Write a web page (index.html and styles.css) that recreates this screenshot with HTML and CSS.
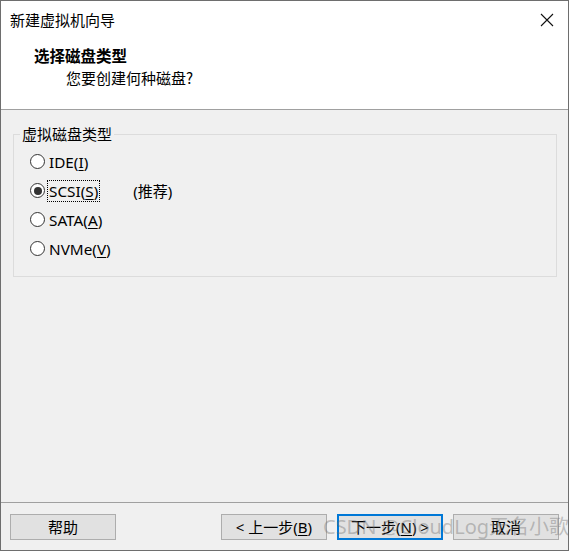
FILE: index.html
```html
<!DOCTYPE html>
<html>
<head>
<meta charset="utf-8">
<link rel="stylesheet" href="styles.css">
</head>
<body>
<div class="window">
  <div class="header">
    <div class="titlebar">
      <span class="title">新建虚拟机向导</span>
      <svg class="close" width="14" height="14" viewBox="0 0 14 14"><path d="M1 1 L13 13 M13 1 L1 13" stroke="#111" stroke-width="1.1" fill="none"/></svg>
    </div>
    <div class="heading">选择磁盘类型</div>
    <div class="sub">您要创建何种磁盘?</div>
  </div>
  <div class="body">
    <fieldset class="group">
      <legend>虚拟磁盘类型</legend>
      <div class="row"><span class="radio"></span><span class="lbl">IDE(<u>I</u>)</span></div>
      <div class="row"><span class="radio on"></span><span class="lbl focus">SCSI(<u>S</u>)</span><span class="rec">(推荐)</span></div>
      <div class="row"><span class="radio"></span><span class="lbl">SATA(<u>A</u>)</span></div>
      <div class="row"><span class="radio"></span><span class="lbl">NVMe(<u>V</u>)</span></div>
    </fieldset>
  </div>
  <div class="footer">
    <button class="btn">帮助</button>
    <div class="spacer"></div>
    <button class="btn">&lt; 上一步(<u>B</u>)</button>
    <button class="btn default">下一步(<u>N</u>) &gt;</button>
    <button class="btn">取消</button>
  </div>
  <div class="watermark">CSDN @CloudLog无名小歌</div>
</div>
</body>
</html>
```

FILE: styles.css
```css
html, body {
  margin: 0;
  padding: 0;
  background: #ffffff;
}
body {
  font-family: "Noto Sans", "Noto Sans CJK SC", sans-serif;
  font-size: 15px;
  color: #000;
}
.window {
  position: relative;
  box-sizing: border-box;
  width: 569px;
  height: 551px;
  border: 1px solid #6e6e6e;
  background: #f0f0f0;
  display: flex;
  flex-direction: column;
}
.header {
  background: #ffffff;
  height: 108px;
  border-bottom: 1px solid #a0a0a0;
  flex: none;
}
.titlebar {
  height: 38px;
  display: flex;
  align-items: center;
  justify-content: space-between;
  padding: 0 14px 0 9px;
}
.title {
  font-family: "Noto Sans CJK SC", sans-serif;
  font-size: 15px;
  line-height: 20px;
}
.close {
  display: block;
}
.heading {
  margin-top: 6px;
  padding-left: 33px;
  font-family: "Noto Sans CJK SC", sans-serif;
  font-weight: bold;
  font-size: 15.5px;
  line-height: 20px;
}
.sub {
  margin-top: 3px;
  padding-left: 65px;
  font-family: "Noto Sans CJK SC", sans-serif;
  font-size: 15px;
  line-height: 20px;
}
.body {
  flex: 1;
  padding: 14px 11px 0 12px;
}
.group {
  margin: 0;
  border: 1px solid #dcdcdc;
  padding: 3px 6px 13px 6px;
}
.group legend {
  padding: 0 2px;
  font-family: "Noto Sans CJK SC", sans-serif;
  font-size: 15px;
  line-height: 20px;
}
.row {
  height: 29px;
  display: flex;
  align-items: center;
  padding-left: 10px;
}
.radio {
  box-sizing: border-box;
  width: 15px;
  height: 15px;
  border: 1px solid #333;
  border-radius: 50%;
  background: #fff;
  display: flex;
  align-items: center;
  justify-content: center;
  margin-right: 2px;
}
.radio.on::after {
  content: "";
  width: 8px;
  height: 8px;
  border-radius: 50%;
  background: #333;
}
.lbl {
  line-height: 20px;
  padding: 0 1px;
  border: 1px solid transparent;
  font-size: 15.3px;
}
.lbl.focus {
  border: 1px dotted #000;
}
.rec {
  margin-left: 33px;
  font-family: "Noto Sans", "Noto Sans CJK SC", sans-serif;
}
u {
  text-decoration-thickness: 1px;
  text-underline-offset: 2px;
}
.footer {
  flex: none;
  box-sizing: border-box;
  height: 48px;
  border-top: 1px solid #a0a0a0;
  display: flex;
  align-items: flex-start;
  padding: 11px 9px 0 9px;
  gap: 10px;
}
.spacer {
  flex: 1;
}
.btn {
  box-sizing: border-box;
  width: 106px;
  height: 26px;
  background: #e1e1e1;
  border: 1px solid #adadad;
  font-family: "Noto Sans", "Noto Sans CJK SC", sans-serif;
  font-size: 15px;
  line-height: 20px;
  color: #000;
  padding: 0;
  margin: 0;
}
.btn.default {
  border: 2px solid #0078d7;
}
.watermark {
  position: absolute;
  left: 322px;
  top: 512px;
  font-family: "Noto Sans", "Noto Sans CJK SC", sans-serif;
  font-size: 20px;
  line-height: 28px;
  color: rgba(110, 110, 110, 0.4);
  white-space: nowrap;
  pointer-events: none;
}
```
